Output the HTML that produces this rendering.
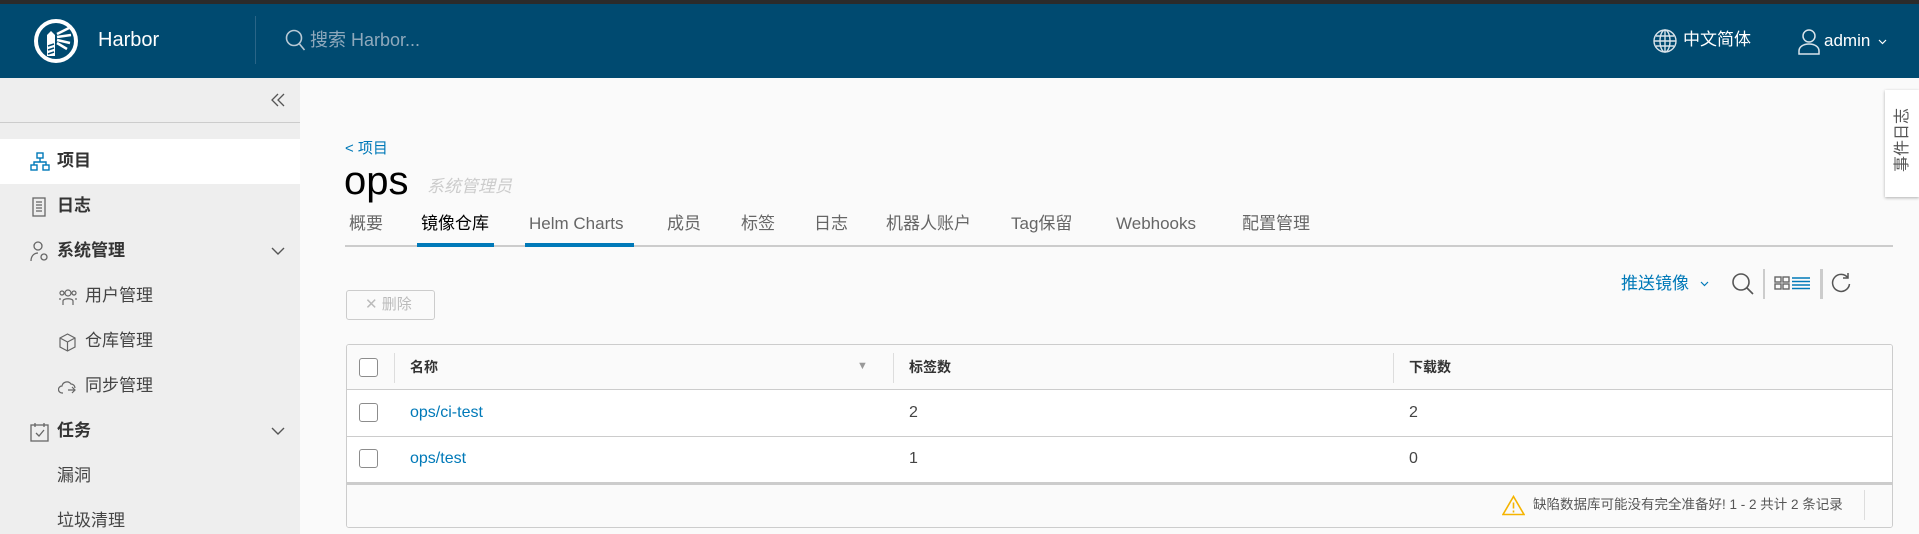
<!DOCTYPE html>
<html><head><meta charset="utf-8"><style>
*{box-sizing:border-box;margin:0;padding:0}
body{width:1919px;height:534px;overflow:hidden;background:#fafafa;font-family:"Liberation Sans","Noto Sans CJK SC",sans-serif;position:relative;color:#565656}
.a{position:absolute;white-space:nowrap;line-height:1.2}
.hdr{left:0;top:0;width:1919px;height:78px;background:#004a70;border-top:4px solid #2b2b2b}
.side{left:0;top:78px;width:300px;height:456px;background:#eeeeee}
.tab{top:213px;font-size:17px;color:#666;height:22px;line-height:22px}
.cb{width:19px;height:19px;border:1px solid #8c8c8c;border-radius:3px;background:#fff}
.sm{font-size:17px;color:#333}
</style></head><body>
<div class="a hdr"></div>
<svg class="a" style="left:33px;top:18px" width="46" height="46" viewBox="0 0 46 46"><circle cx="23" cy="23" r="20" fill="none" stroke="#fff" stroke-width="4"/><path d="M14 38V17l4-4 4 4v21z" fill="#fff"/><path d="M24 16l12-6M24 19l14-2M24 22l13 3M24 25l10 6" stroke="#fff" stroke-width="2.5"/><path d="M15 28l6-2M15 32l6-2M15 36l6-2" stroke="#004a70" stroke-width="1.5"/></svg>
<div class="a" style="left:98px;top:28px;font-size:20px;color:#fff">Harbor</div>
<div class="a" style="left:255px;top:16px;width:1px;height:48px;background:#2a6587"></div>
<svg class="a" style="left:285px;top:29px" width="22" height="24" viewBox="0 0 22 24"><circle cx="9" cy="9" r="7.5" fill="none" stroke="#b8c9d5" stroke-width="1.6"/><path d="M14.5 15l5 6" stroke="#b8c9d5" stroke-width="1.6"/></svg>
<div class="a" style="left:310px;top:30px;font-size:18px;color:#8fa9bc">搜索 Harbor...</div>
<svg class="a" style="left:1652px;top:28px" width="26" height="26" viewBox="0 0 26 26" fill="none" stroke="#d9e3ea" stroke-width="1.4"><circle cx="13" cy="13" r="11"/><ellipse cx="13" cy="13" rx="5" ry="11"/><path d="M2 13h22M4 8h18M4 18h18M13 2v22"/></svg>
<div class="a" style="left:1683px;top:30px;font-size:17px;color:#fff">中文简体</div>
<svg class="a" style="left:1797px;top:28px" width="24" height="28" viewBox="0 0 24 28" fill="none" stroke="#d9e3ea" stroke-width="1.5"><circle cx="12" cy="8" r="6"/><path d="M2 26v-3c0-4 4-7 10-7s10 3 10 7v3z"/></svg>
<div class="a" style="left:1824px;top:31px;font-size:17px;color:#fff">admin</div>
<svg class="a" style="left:1878px;top:39px" width="9" height="6" viewBox="0 0 9 6" fill="none" stroke="#fff" stroke-width="1.2"><path d="M1 1l3.5 3.5L8 1"/></svg>

<div class="a side"></div>
<div class="a" style="left:0;top:122px;width:300px;height:1px;background:#ccc"></div>
<svg class="a" style="left:271px;top:93px" width="14" height="14" viewBox="0 0 14 14" fill="none" stroke="#555" stroke-width="1.3"><path d="M7 1L1 7l6 6M13 1L7 7l6 6"/></svg>
<div class="a" style="left:0;top:139px;width:300px;height:45px;background:#fff"></div>
<svg class="a" style="left:30px;top:152px" width="20" height="20" viewBox="0 0 20 20" fill="none" stroke="#0079b8" stroke-width="1.4"><rect x="7" y="1" width="6" height="5"/><rect x="1" y="13" width="6" height="5"/><rect x="13" y="13" width="6" height="5"/><path d="M10 6v4M4 13v-3h12v3"/></svg>
<div class="a sm" style="left:57px;top:151px;font-weight:bold">项目</div>
<svg class="a" style="left:32px;top:197px" width="14" height="20" viewBox="0 0 14 20" fill="none" stroke="#666" stroke-width="1.3"><rect x="1" y="1" width="12" height="18"/><path d="M4 5h6M4 8h6M4 11h6M4 14h6"/></svg>
<div class="a sm" style="left:57px;top:196px;font-weight:bold">日志</div>
<svg class="a" style="left:30px;top:241px" width="20" height="22" viewBox="0 0 20 22" fill="none" stroke="#666" stroke-width="1.3"><circle cx="8" cy="5" r="4"/><path d="M1 20c0-5 3-8 7-8"/><circle cx="14" cy="16" r="3"/></svg>
<div class="a sm" style="left:57px;top:241px;font-weight:bold">系统管理</div>
<svg class="a" style="left:271px;top:247px" width="14" height="9" viewBox="0 0 14 9" fill="none" stroke="#555" stroke-width="1.4"><path d="M1 1l6 6 6-6"/></svg>
<svg class="a" style="left:59px;top:288px" width="18" height="18" viewBox="0 0 18 18" fill="none" stroke="#666" stroke-width="1.2"><circle cx="9" cy="5" r="3"/><circle cx="3" cy="5" r="2"/><circle cx="15" cy="5" r="2"/><path d="M4 17v-4c0-3 10-3 10 0v4M1 12v-2M17 12v-2"/></svg>
<div class="a sm" style="left:85px;top:286px;color:#444">用户管理</div>
<svg class="a" style="left:59px;top:333px" width="17" height="19" viewBox="0 0 17 19" fill="none" stroke="#666" stroke-width="1.2"><path d="M8.5 1L16 5v9l-7.5 4L1 14V5zM1 5l7.5 4L16 5M8.5 9v9"/></svg>
<div class="a sm" style="left:85px;top:331px;color:#444">仓库管理</div>
<svg class="a" style="left:58px;top:379px" width="20" height="16" viewBox="0 0 20 16" fill="none" stroke="#666" stroke-width="1.2"><path d="M5 14H4a3.5 3.5 0 010-7 5 5 0 019-2 4 4 0 014 4M10 11h7M14 8l3 3-3 3"/></svg>
<div class="a sm" style="left:85px;top:376px;color:#444">同步管理</div>
<svg class="a" style="left:30px;top:422px" width="20" height="20" viewBox="0 0 20 20" fill="none" stroke="#666" stroke-width="1.3"><rect x="1" y="3" width="17" height="16"/><path d="M5 1v4M14 1v4M6 11l3 3 5-6"/></svg>
<div class="a sm" style="left:57px;top:421px;font-weight:bold">任务</div>
<svg class="a" style="left:271px;top:427px" width="14" height="9" viewBox="0 0 14 9" fill="none" stroke="#555" stroke-width="1.4"><path d="M1 1l6 6 6-6"/></svg>
<div class="a sm" style="left:57px;top:466px;color:#444">漏洞</div>
<div class="a sm" style="left:57px;top:511px;color:#444">垃圾清理</div>

<div class="a" style="left:345px;top:140px;font-size:15px;color:#0079b8">&lt; 项目</div>
<div class="a" style="left:344px;top:157px;font-size:40px;color:#000">ops</div>
<div class="a" style="left:427px;top:177px;font-size:17px;color:#ccc;font-style:italic">系统管理员</div>
<div class="a tab" style="left:349px">概要</div>
<div class="a tab" style="left:421px;color:#000">镜像仓库</div>
<div class="a tab" style="left:529px">Helm Charts</div>
<div class="a tab" style="left:667px">成员</div>
<div class="a tab" style="left:741px">标签</div>
<div class="a tab" style="left:814px">日志</div>
<div class="a tab" style="left:886px">机器人账户</div>
<div class="a tab" style="left:1011px">Tag保留</div>
<div class="a tab" style="left:1116px">Webhooks</div>
<div class="a tab" style="left:1242px">配置管理</div>
<div class="a" style="left:345px;top:245px;width:1548px;height:2px;background:#ccc"></div>
<div class="a" style="left:417px;top:243px;width:77px;height:4px;background:#0079b8"></div>
<div class="a" style="left:525px;top:243px;width:109px;height:4px;background:#0079b8"></div>

<div class="a" style="left:1885px;top:90px;width:34px;height:107px;background:#fff;box-shadow:0 1px 3px rgba(0,0,0,.3)"></div>
<div class="a" style="left:1893px;top:108px;font-size:16px;color:#555;writing-mode:vertical-rl;text-orientation:sideways;transform:rotate(180deg)">事件日志</div>

<div class="a" style="left:1621px;top:274px;font-size:17px;color:#0079b8">推送镜像</div>
<svg class="a" style="left:1700px;top:281px" width="9" height="6" viewBox="0 0 9 6" fill="none" stroke="#0079b8" stroke-width="1.2"><path d="M1 1l3.5 3.5L8 1"/></svg>
<svg class="a" style="left:1731px;top:272px" width="24" height="24" viewBox="0 0 24 24" fill="none" stroke="#555" stroke-width="1.6"><circle cx="10" cy="10" r="8"/><path d="M16 16l6 6"/></svg>
<div class="a" style="left:1763px;top:269px;width:2px;height:30px;background:#ccc"></div>
<svg class="a" style="left:1774px;top:276px" width="38" height="14" viewBox="0 0 38 14" fill="none" stroke-width="1.4"><g stroke="#666"><rect x="1" y="1" width="6" height="5"/><rect x="9" y="1" width="6" height="5"/><rect x="1" y="8" width="6" height="5"/><rect x="9" y="8" width="6" height="5"/></g><g stroke="#0079b8"><path d="M18 2h18M18 5.5h18M18 9h18M18 12.5h18"/></g></svg>
<div class="a" style="left:1820px;top:269px;width:3px;height:30px;background:#ccc"></div>
<svg class="a" style="left:1830px;top:272px" width="22" height="22" viewBox="0 0 22 22" fill="none" stroke="#555" stroke-width="1.5"><path d="M18 6A8.5 8.5 0 1019.5 12"/><path d="M18 1v5h-5"/></svg>

<div class="a" style="left:346px;top:290px;width:89px;height:30px;border:1px solid #ccc;border-radius:3px"></div>
<div class="a" style="left:365px;top:296px;font-size:15px;color:#bbb">✕ 删除</div>

<div class="a" style="left:346px;top:344px;width:1547px;height:184px;border:1px solid #ccc;border-radius:3px;background:#fff;overflow:hidden">
<div class="a" style="left:0;top:0;width:1547px;height:45px;background:#fafafa;border-bottom:1px solid #ccc"></div>
<div class="a" style="left:0;top:91px;width:1547px;height:1px;background:#ccc"></div>
<div class="a" style="left:0;top:137px;width:1547px;height:45px;background:#fafafa;border-top:3px solid #ccc"></div>
<div class="a cb" style="left:12px;top:13px"></div>
<div class="a cb" style="left:12px;top:58px"></div>
<div class="a cb" style="left:12px;top:104px"></div>
<div class="a" style="left:47px;top:8px;width:1px;height:30px;background:#ddd"></div>
<div class="a" style="left:546px;top:8px;width:1px;height:30px;background:#ddd"></div>
<div class="a" style="left:1046px;top:8px;width:1px;height:30px;background:#ddd"></div>
<div class="a" style="left:63px;top:14px;font-size:14px;font-weight:bold;color:#333">名称</div>
<div class="a" style="left:510px;top:15px;font-size:11px;color:#999">▼</div>
<div class="a" style="left:562px;top:14px;font-size:14px;font-weight:bold;color:#333">标签数</div>
<div class="a" style="left:1062px;top:14px;font-size:14px;font-weight:bold;color:#333">下载数</div>
<div class="a" style="left:63px;top:58px;font-size:16px;color:#0079b8">ops/ci-test</div>
<div class="a" style="left:562px;top:58px;font-size:16px;color:#444">2</div>
<div class="a" style="left:1062px;top:58px;font-size:16px;color:#444">2</div>
<div class="a" style="left:63px;top:104px;font-size:16px;color:#0079b8">ops/test</div>
<div class="a" style="left:562px;top:104px;font-size:16px;color:#444">1</div>
<div class="a" style="left:1062px;top:104px;font-size:16px;color:#444">0</div>
<svg class="a" style="left:1155px;top:150px" width="23" height="21" viewBox="0 0 23 21" fill="none" stroke="#f5b400" stroke-width="1.6"><path d="M11.5 1.5L22 19.5H1z"/><path d="M11.5 7.5v6M11.5 15.5v2"/></svg>
<div class="a" style="left:1186px;top:152px;font-size:13.5px;color:#565656">缺陷数据库可能没有完全准备好! 1 - 2 共计 2 条记录</div>
<div class="a" style="left:1517px;top:145px;width:1px;height:30px;background:#ddd"></div>
</div>
</body></html>
